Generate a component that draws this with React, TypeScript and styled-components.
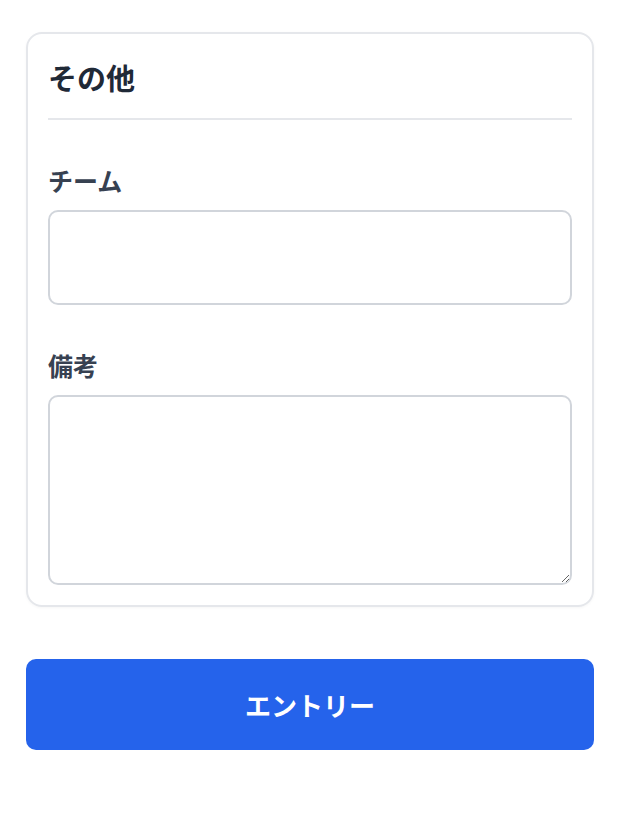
import React from "react";
import styled, { createGlobalStyle } from "styled-components";

const Global = createGlobalStyle`
  html, body { margin: 0; padding: 0; background: #ffffff; }
  body { font-family: "Noto Sans CJK JP", "Noto Sans", sans-serif; }
  * { box-sizing: border-box; }
`;

const Page = styled.div`
  padding: 32px 26px 40px;
  display: flex;
  flex-direction: column;
  gap: 52px;
`;

const Card = styled.section`
  border: 2px solid #e5e7eb;
  border-radius: 16px;
  padding: 22px 20px 20px;
  display: flex;
  flex-direction: column;
  gap: 42px;
  box-shadow: 0 1px 3px rgba(0, 0, 0, 0.04);
`;

const Title = styled.h2`
  margin: 0;
  font-size: 29px;
  line-height: 42px;
  font-weight: 700;
  color: #1f2937;
  padding-bottom: 20px;
  border-bottom: 2px solid #e5e7eb;
`;

const Field = styled.div`
  display: flex;
  flex-direction: column;
  gap: 12px;
`;

const Label = styled.label`
  font-size: 25px;
  line-height: 36px;
  font-weight: 700;
  color: #374151;
`;

const Input = styled.input`
  height: 95px;
  width: 100%;
  border: 2px solid #d1d5db;
  border-radius: 10px;
  padding: 0 16px;
  font-size: 24px;
  font-family: inherit;
  outline: none;
  background: #fff;
`;

const TextArea = styled.textarea`
  height: 190px;
  width: 100%;
  border: 2px solid #d1d5db;
  border-radius: 10px;
  padding: 12px 16px;
  font-size: 24px;
  font-family: inherit;
  outline: none;
  resize: vertical;
  display: block;
  background: #fff;
`;

const Button = styled.button`
  height: 91px;
  width: 100%;
  border: none;
  border-radius: 10px;
  background: #2563eb;
  color: #ffffff;
  font-family: inherit;
  font-size: 26px;
  font-weight: 700;
  cursor: pointer;
`;

export default function App() {
  return (
    <>
      <Global />
      <Page>
        <Card>
          <Title>その他</Title>
          <Field>
            <Label htmlFor="team">チーム</Label>
            <Input id="team" type="text" />
          </Field>
          <Field>
            <Label htmlFor="note">備考</Label>
            <TextArea id="note" />
          </Field>
        </Card>
        <Button type="button">エントリー</Button>
      </Page>
    </>
  );
}
